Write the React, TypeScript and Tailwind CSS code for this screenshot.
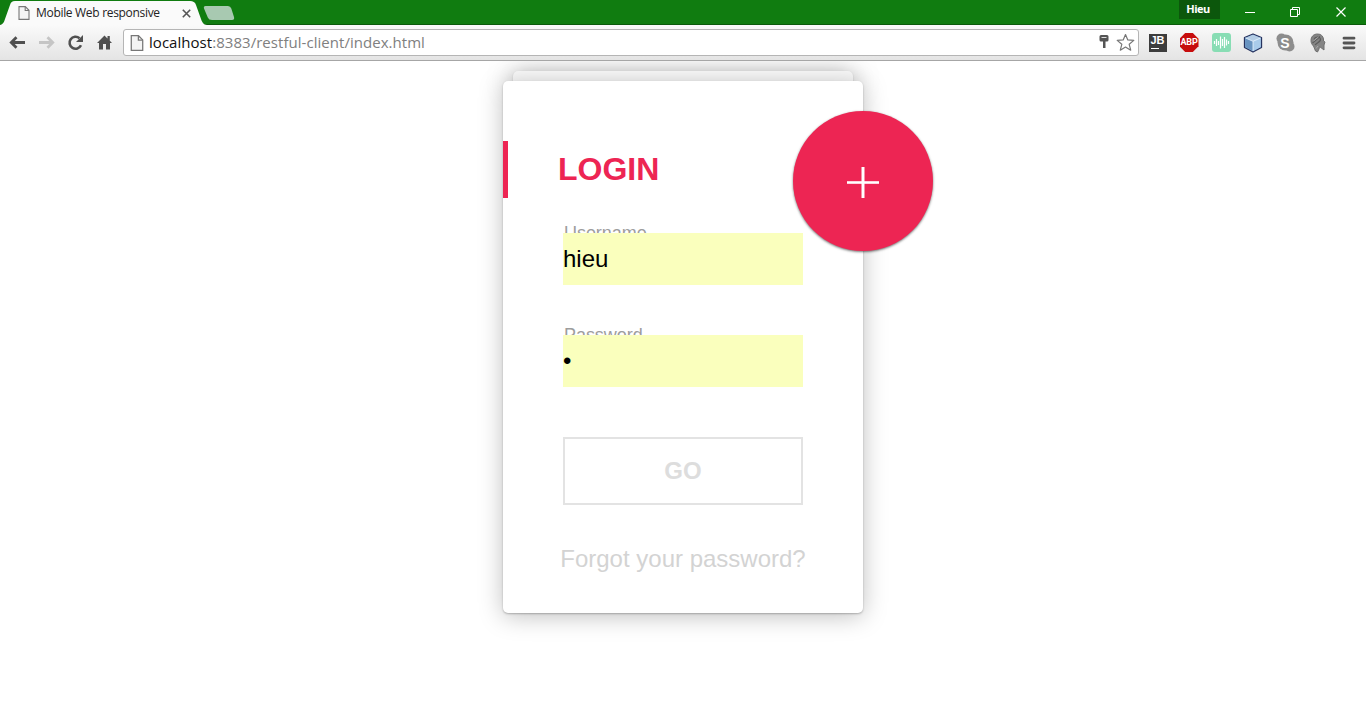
import type { ReactNode } from "react";

function PageIcon({ className }: { className: string }) {
  return (
    <svg viewBox="0 0 12 14" className={className} fill="none" stroke="#777" strokeWidth="1.1">
      <path d="M1 .6h6.3L11 4.3v9.1H1z" fill="#f4f4f4" />
      <path d="M7.2.8v3.7H11" />
    </svg>
  );
}

function TitleBar() {
  return (
    <header className="relative flex h-[25px] bg-[#107c10] font-['Open_Sans',sans-serif]">
      <div className="relative h-[25px] w-[204px] shrink-0">
        <svg className="absolute top-0 left-0" width="240" height="25" viewBox="0 0 240 25">
          <path d="M0 24.5H204" stroke="#0b5a0b" />
          <path d="M204 24.5H240" stroke="#0b5a0b" />
          <path d="M0 25C3 24.5 4 22 5 19L10 5C11 2 12 1 15 1H190C193 1 195 2 196 5L201 19C202.500 23 203.500 24.500 207 25Z" fill="#fafafa" />
          <path d="M205.500 6H228Q230.500 6 231.300 8.500L234 17Q234.800 20 232 20H212Q208.800 20 207.800 17.500L204 8.500Q203.300 6 205.500 6Z" fill="#a8c9b1" />
        </svg>
        <div className="relative flex h-[25px] items-center pt-px pl-[18px]">
          <PageIcon className="h-[14px] w-[12px]" />
          <span className="ml-[6px] w-[146px] text-[12px] leading-[16px] tracking-[-0.31px] whitespace-nowrap text-[#222]">
            Mobile Web responsive
          </span>
          <svg className="h-[9px] w-[9px]" viewBox="0 0 9 9" stroke="#555" strokeWidth="1.6">
            <path d="M.8.8l7.400 7.400M8.200.8L.8 8.200" />
          </svg>
        </div>
      </div>
      <div className="flex flex-1 items-start justify-end border-b border-[#0b5a0b]">
        <div className="flex h-[19px] w-[41px] items-center justify-center bg-[#0c570c] pr-[3px] pb-[2px] text-[11px] leading-none font-bold tracking-[-0.5px] text-white">
          Hieu
        </div>
        <svg width="146" height="24" viewBox="0 0 146 24" fill="none" stroke="#fff">
          <path d="M25 12.500h10" />
          <path d="M70.500 9.500h7v7h-7zM72.500 9.500v-2h7v7h-2" />
          <path d="M116.500 7.500l9 9M125.500 7.500l-9 9" strokeWidth="1.200" />
        </svg>
      </div>
    </header>
  );
}

function Slot({ children }: { children: ReactNode }) {
  return <div className="flex h-6 w-8 shrink-0 items-center justify-center">{children}</div>;
}

function Toolbar() {
  return (
    <nav className="flex h-9 items-center border-b border-[#a6a6a6] bg-linear-to-b from-[#fafafa] to-[#e4e4e4]">
      <svg width="123" height="35" viewBox="0 0 123 35" className="shrink-0" fill="none">
        <path d="M25 17.500H12M16.500 12.300L11.300 17.500L16.500 22.700" stroke="#505050" strokeWidth="2.800" />
        <path d="M39 17.500H52M47.500 12.300L52.700 17.500L47.500 22.700" stroke="#c5c5c5" strokeWidth="2.800" />
        <path d="M81 20.300A6 6 0 1 1 79.500 13.200" stroke="#505050" strokeWidth="2.600" />
        <path d="M83 10V17H76Z" fill="#505050" />
        <path d="M97 18L104.500 10.500L107.500 13.500V11H109.800V15.800L112 18H110V24.500H106V19H103V24.500H99V18Z" fill="#505050" />
      </svg>
      <div className="flex h-[27px] w-[1016px] shrink-0 items-center rounded-[3px] border border-[#b5b5b5] bg-white pl-[6px]">
        <PageIcon className="h-[16px] w-[14px]" />
        <span className="ml-[5px] flex-1 pb-[2px] font-['Open_Sans',sans-serif] text-[15px] leading-5 tracking-[0.04px] whitespace-nowrap text-[#808080]">
          <span className="text-[#111]">localhost</span>:8383/restful-client/index.html
        </span>
        <svg width="42" height="25" viewBox="0 0 42 25">
          <path d="M3.500 6.500Q3.500 5 5 5H11Q12.500 5 12.500 6.500V10Q12.500 11.500 11 11.500H9.500V18H7V11.500H5Q3.500 11.500 3.500 10Z" fill="#555" />
          <path d="M5.500 7.500h5" stroke="#ddd" />
          <path d="M29.500 4.500L31.800 9.900L37.800 10.400L33.200 14.300L34.700 20.200L29.500 17L24.300 20.200L25.800 14.300L21.200 10.400L27.200 9.900Z" fill="#fff" stroke="#777" strokeWidth="1.200" strokeLinejoin="round" />
        </svg>
      </div>
      <div className="ml-[2px] flex">
        <Slot>
          <div className="ml-px flex h-[18px] w-[18px] flex-col bg-[#3d3d3d] pt-px pl-[2px] font-['Liberation_Sans',sans-serif] text-[11px] leading-[11px] font-bold text-white">
            JB
            <span className="mt-[2px] h-[1px] w-2 bg-white" />
          </div>
        </Slot>
        <Slot>
          <div className="flex h-[19px] w-[19px] items-center justify-center bg-[#c70d0d] pt-px font-['Roboto',sans-serif] text-[9px] font-bold tracking-[-0.2px] text-white [clip-path:polygon(30%_0,70%_0,100%_30%,100%_70%,70%_100%,30%_100%,0_70%,0_30%)]">
            ABP
          </div>
        </Slot>
        <Slot>
          <svg width="19" height="19" viewBox="0 0 19 19">
            <rect width="19" height="19" rx="3" fill="#88ddb4" />
            <path d="M2.500 8v3M4.500 6v7M6.500 8v4M8.500 3.500v12M10.500 6v7M12.500 4v11M14.500 6.500v6M16.500 8v3" stroke="#fff" strokeWidth="1.200" />
          </svg>
        </Slot>
        <Slot>
          <svg width="20" height="20" viewBox="0 0 20 20" stroke="#27335f" strokeWidth="1.300" strokeLinejoin="round">
            <path d="M10 1L18.500 4.500V14.500L10 19L1.500 14.500V4.500Z" fill="#8bb4dc" />
            <path d="M10 1.700L17.700 4.900L10 8.300L2.300 4.900Z" fill="#b4cde5" stroke="none" />
            <path d="M10 8.300L17.700 4.900V14L10 18Z" fill="#a9cbea" stroke="none" />
            <path d="M10 8.300L2.300 4.900V14L10 18Z" fill="#6893c0" stroke="none" />
            <path d="M2.500 5L10 8.300L17.500 5M10 8.300V18" stroke="#edf6ff" strokeWidth=".8" fill="none" />
          </svg>
        </Slot>
        <Slot>
          <div className="relative flex h-[19px] w-[19px] items-center justify-center">
            <svg className="absolute inset-0" width="19" height="19" viewBox="0 0 19 19" fill="#8d8d8d">
              <circle cx="9.500" cy="9.500" r="8" />
              <circle cx="5.500" cy="5.500" r="5" />
              <circle cx="13.500" cy="13.500" r="5" />
            </svg>
            <span className="relative font-['Liberation_Sans',sans-serif] text-[14px] leading-none font-bold text-white">S</span>
          </div>
        </Slot>
        <Slot>
          <svg width="18" height="20" viewBox="0 0 18 20" className="ml-[2px]">
            <path d="M8.500 1C4.500 1 2 3.800 2 7.500C2 10 3 11.600 4.500 13L6.500 18L8.500 19L10 16L10.500 13.500L15 17V12L16 9L14.500 8V6C14 3 12 1 8.500 1Z" fill="#858585" stroke="#707070" />
            <path d="M5 6.500C6 3.500 11 3 11.500 6C12 9 8 9.500 6 12M3.500 10L11 3.500" fill="none" stroke="#5c5c5c" strokeWidth="1.200" />
            <path d="M4.500 8L9.500 4M7 15.500L9 13" stroke="#aaa" />
          </svg>
        </Slot>
        <Slot>
          <svg width="14" height="14" viewBox="0 0 14 14" stroke="#555" strokeWidth="2.800" strokeLinecap="round">
            <path d="M2 2.200h10M2 7h10M2 11.800h10" />
          </svg>
        </Slot>
      </div>
    </nav>
  );
}

function Field({ label, value, type }: { label: string; value: string; type: string }) {
  return (
    <div className="flex flex-col">
      <label className="-mb-[9px] h-[19px] pt-px pl-px text-[18px] leading-[18px] tracking-[-0.05px] text-[#9d9d9d]">{label}</label>
      <input
        type={type}
        readOnly
        value={value}
        className="relative h-[52px] w-[240px] bg-[#faffbd] p-0 text-[24px] text-black outline-none"
      />
    </div>
  );
}

export default function App() {
  return (
    <div className="flex h-[728px] w-[1366px] flex-col overflow-hidden bg-white">
      <TitleBar />
      <Toolbar />
      <main className="flex flex-1 flex-col items-center overflow-hidden pt-[10px] font-['Liberation_Sans',Arial,sans-serif]">
        <div className="h-[10px] w-[340px] rounded-t-[5px] bg-[#fafafa] shadow-[0_1px_2px_rgba(0,0,0,0.15),0_5px_24px_rgba(0,0,0,0.55)]" />
        <section className="relative h-[532px] w-[360px] rounded-[5px] bg-white pt-[60px] shadow-[0_1px_2px_rgba(0,0,0,0.25),0_3px_24px_rgba(0,0,0,0.25)]">
          <h1 className="flex h-[57px] items-center border-l-[5px] border-[#ed2553] pb-[1px] pl-[50px] text-[32px] leading-none font-bold text-[#ed2553]">
            LOGIN
          </h1>
          <form className="flex flex-col px-[60px] pt-[25px]">
            <Field label="Username" value="hieu" type="text" />
            <div className="pt-10">
              <Field label="Password" value="1" type="password" />
            </div>
            <button type="button" className="mt-[50px] h-[68px] w-[240px] border-2 border-[#e3e3e3] text-[24px] font-bold text-[#ddd]">
              GO
            </button>
          </form>
          <p className="pt-[40px] text-center text-[24px] leading-[28px] text-[#d3d3d3]">Forgot your password?</p>
          <button
            type="button"
            aria-label="Register"
            className="absolute top-[30px] -right-[70px] flex h-[140px] w-[140px] items-center justify-center rounded-full bg-[#ed2553] shadow-[0_1px_3px_rgba(0,0,0,0.3),0_1px_2px_rgba(0,0,0,0.3)]"
          >
            <svg width="32" height="32" viewBox="0 0 32 32" className="mt-[3px]" stroke="#fff">
              <path d="M0 15.500h32" strokeWidth="2.600" />
              <path d="M16 0v31" strokeWidth="3" />
            </svg>
          </button>
        </section>
      </main>
    </div>
  );
}
